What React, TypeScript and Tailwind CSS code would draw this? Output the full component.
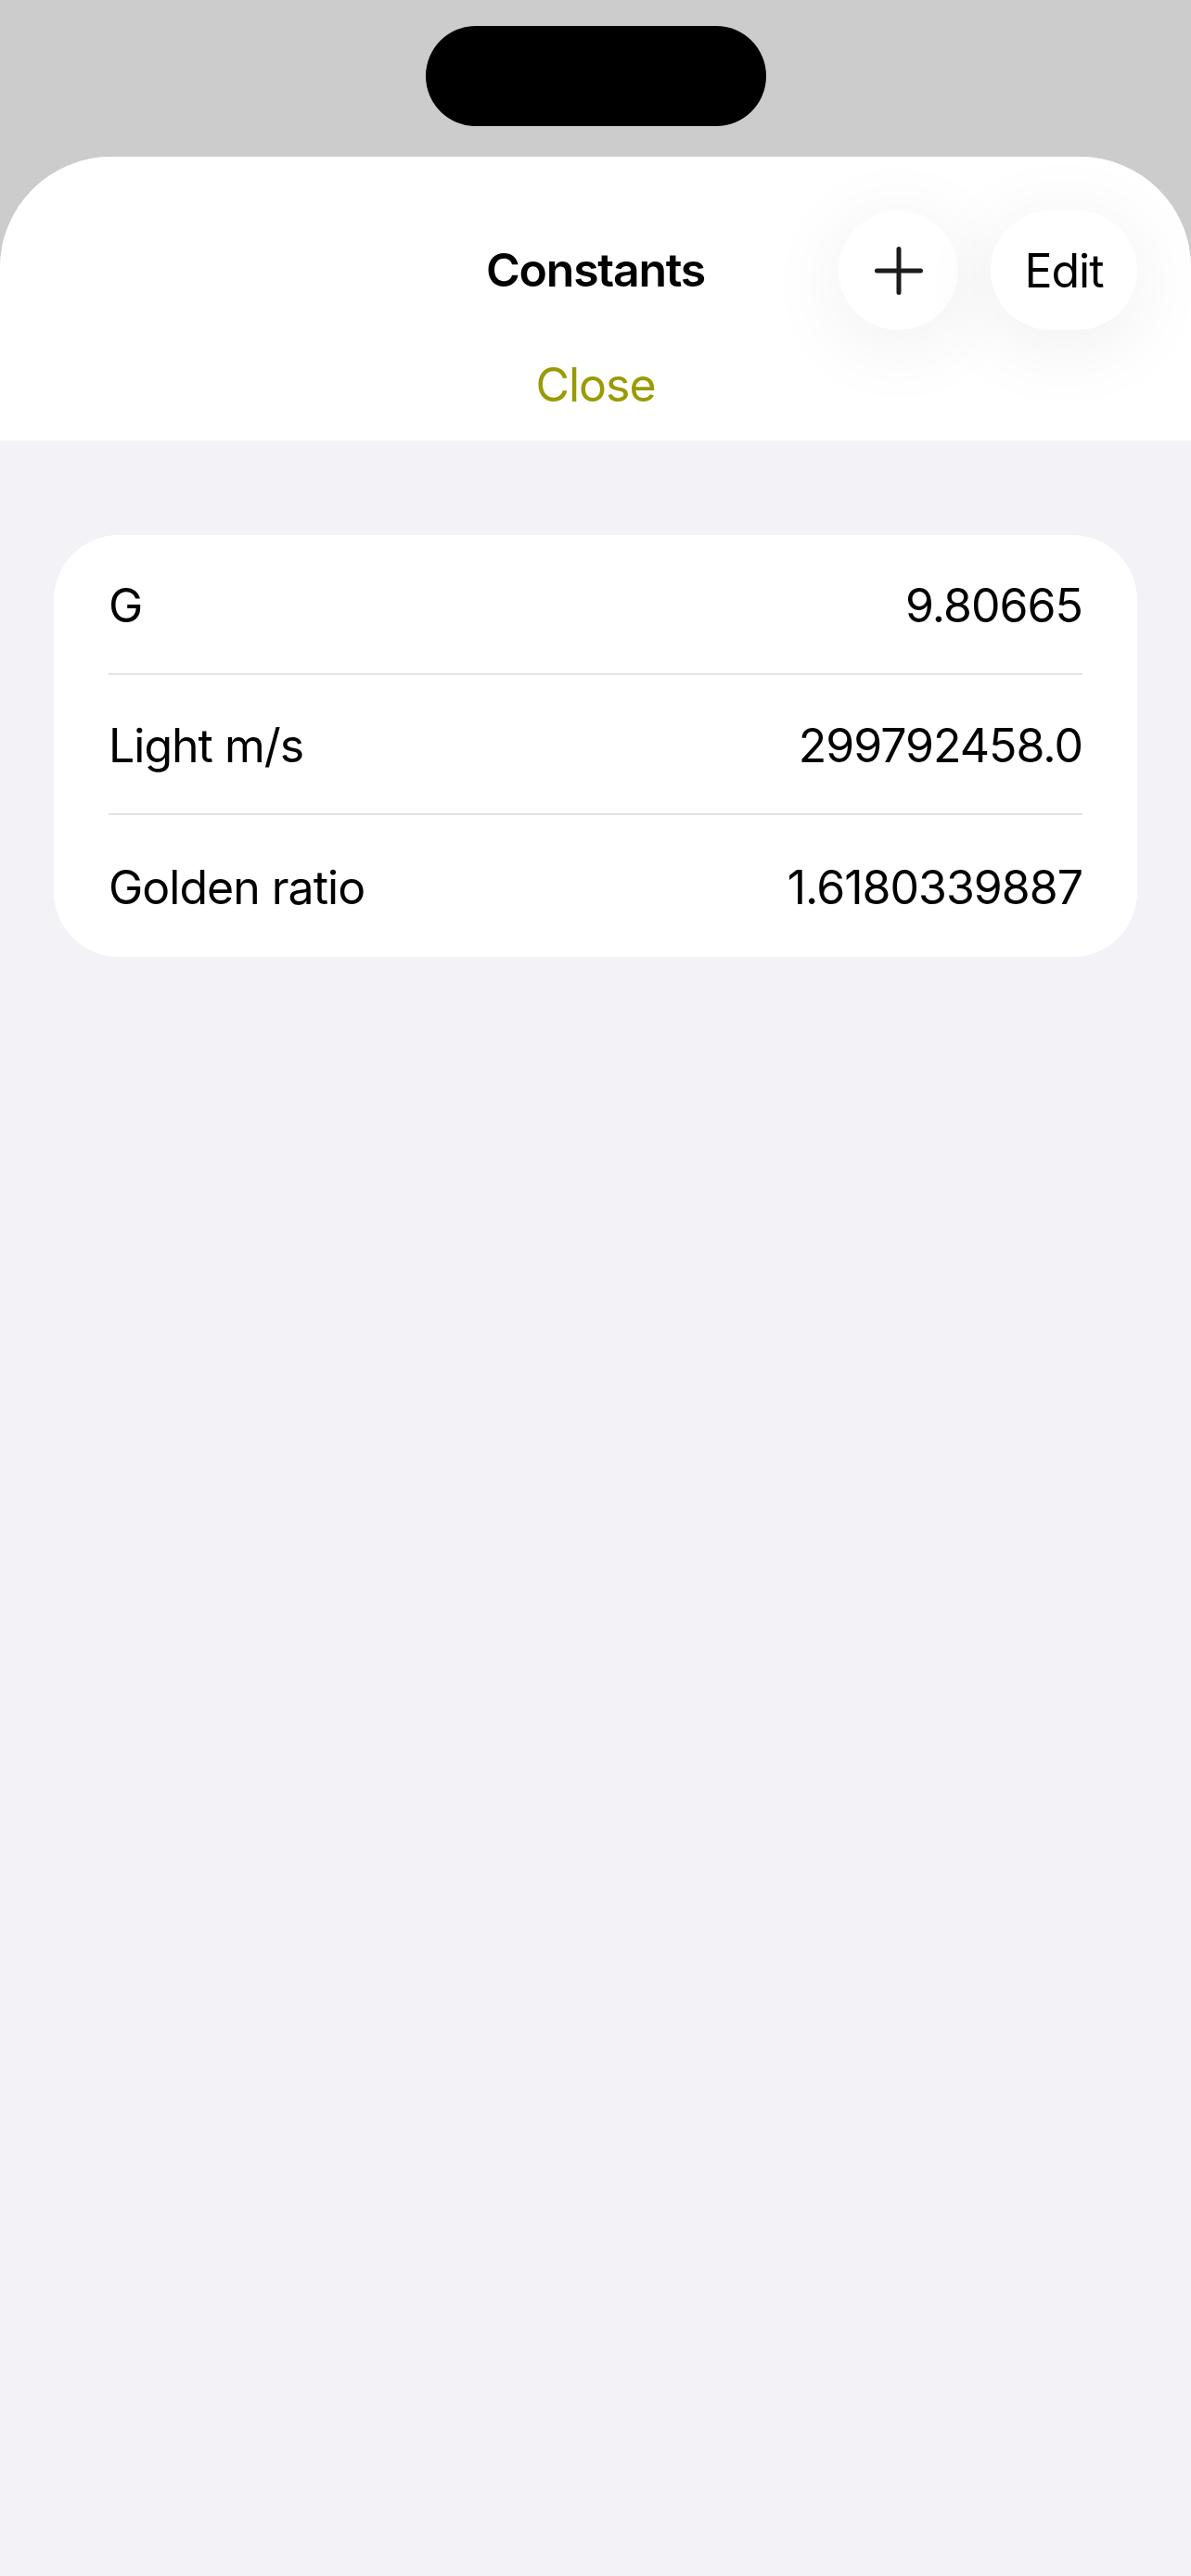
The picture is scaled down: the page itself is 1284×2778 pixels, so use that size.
import React from "react";

const rows = [
  { label: "G", value: "9.80665" },
  { label: "Light m/s", value: "299792458.0" },
  { label: "Golden ratio", value: "1.6180339887" },
];

export default function App() {
  return (
    <div
      className="min-h-[2778px] w-full bg-[#cccccc] flex flex-col"
      style={{ fontFamily: "Inter, 'Noto Sans', 'Liberation Sans', sans-serif" }}
    >
      <div className="mt-[28px] mx-auto w-[367px] h-[108px] rounded-full bg-black" />
      <div className="mt-[33px] flex-1 flex flex-col bg-[#f2f2f7] rounded-t-[120px] overflow-hidden">
        <div className="bg-white h-[306px] flex flex-col">
          <div className="pt-[58px] grid grid-cols-[1fr_auto_1fr] items-center">
            <div />
            <div className="text-[50px] leading-[61px] font-semibold text-black tracking-[-0.025em]">
              Constants
            </div>
            <div className="flex justify-end pr-[58px] gap-[35px]">
              <button className="w-[129px] h-[129px] rounded-full bg-white shadow-[0_14px_90px_rgba(0,0,0,0.07)] flex items-center justify-center">
                <svg width="52" height="52" viewBox="0 0 52 52" fill="none">
                  <path
                    d="M26 2.5V49.5M2.5 26H49.5"
                    stroke="#1c1c1e"
                    strokeWidth="5"
                    strokeLinecap="round"
                  />
                </svg>
              </button>
              <button className="w-[158px] h-[129px] rounded-full bg-white shadow-[0_14px_90px_rgba(0,0,0,0.07)] flex items-center justify-center text-[50px] leading-none text-black tracking-[-0.02em]">
                Edit
              </button>
            </div>
          </div>
          <div className="mt-[29px] text-center text-[50px] leading-[61px] text-[#9a9a05] tracking-[-0.02em]">
            Close
          </div>
        </div>
        <div className="mt-[102px] mx-[58px] bg-white rounded-[70px] overflow-hidden">
          {rows.map((r, i) => (
            <div key={r.label} className="px-[59px]">
              <div
                className={
                  "flex items-center justify-between text-[50px] text-black tracking-[-0.02em] pt-[4px] " +
                  (i < rows.length - 1 ? "h-[151px] border-b-[2px] border-[#e3e3e8]" : "h-[153px]")
                }
              >
                <span>{r.label}</span>
                <span>{r.value}</span>
              </div>
            </div>
          ))}
        </div>
      </div>
    </div>
  );
}
